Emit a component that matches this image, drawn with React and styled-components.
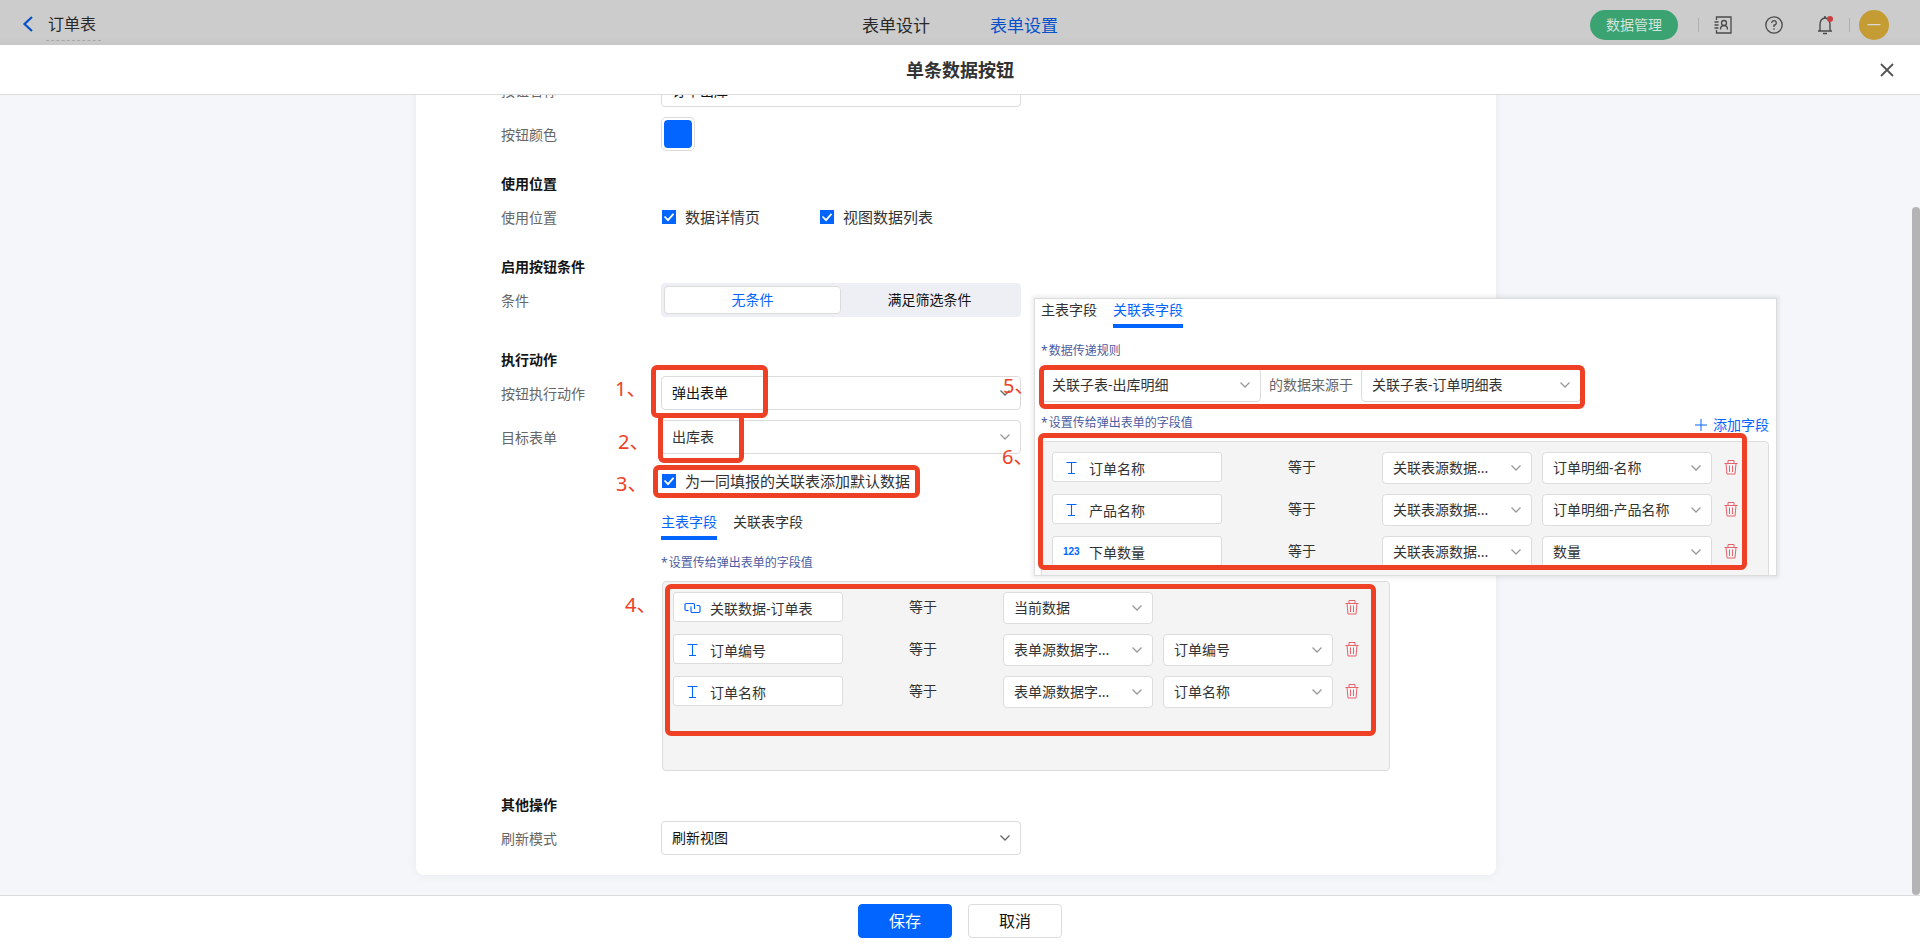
import React, { useLayoutEffect, useRef } from "react";
import styled, { createGlobalStyle } from "styled-components";

const GlobalStyle = createGlobalStyle`
  *, *::before, *::after {
    box-sizing: border-box;
  }
  html, body, #root {
    height: 100%;
  }
  body {
    margin: 0;
    overflow: hidden;
    font-family: "Noto Sans", "Noto Sans CJK SC", sans-serif;
    font-size: 14px;
    line-height: 20px;
    color: #141414;
  }
  button, input, select {
    font: inherit;
    color: inherit;
  }
`;

const Page = styled.div`
  display: flex;
  flex-direction: column;
  height: 100%;
  background: #fff;
`;

/* top bar, dimmed by the open dialog */
const TopBar = styled.header`
  display: grid;
  grid-template-columns: 1fr auto 1fr;
  align-items: center;
  flex: none;
  height: 45px;
  padding: 0 31px 0 22px;
  background: linear-gradient(#cccccc 36px, #c7c7c7);
  color: #292929;
`;

const BackLink = styled.a`
  display: flex;
  align-items: center;
  gap: 12px;
  padding-top: 3px;
  font-size: 16px;
  text-decoration: none;
  color: inherit;
`;

const FormName = styled.span`
  padding: 0 5px 0 2px;
  border-bottom: 1px dashed #a8a8a8;
  line-height: 32px;
`;

const TopTabs = styled.nav`
  display: flex;
  gap: 60px;
  padding-top: 6px;
  margin-left: 9px;
`;

const TopTab = styled.a`
  font-size: 17px;
  text-decoration: none;
  color: ${(props) => (props.$active ? "#0551cc" : "#292929")};
`;

const TopTools = styled.div`
  display: flex;
  align-items: center;
  justify-content: flex-end;
  padding-top: 5px;
`;

const DataButton = styled.button`
  width: 88px;
  height: 30px;
  margin-right: 20px;
  padding: 0;
  border: 0;
  border-radius: 15px;
  background: #3ba272;
  color: #d3e3db;
`;

const Divider = styled.span`
  width: 1px;
  height: 14px;
  background: #b0b0b0;
`;

const IconButton = styled.button`
  display: flex;
  padding: 0;
  border: 0;
  background: none;
  color: ${(props) => props.$color || "#4a4a4a"};
`;

const TopIcons = styled.div`
  display: flex;
  align-items: center;
  gap: 33px;
  margin: 0 15px;
`;

const Avatar = styled.button`
  width: 30px;
  height: 30px;
  margin-left: 9px;
  padding: 0;
  border: 0;
  border-radius: 50%;
  background: #c59c34;
  color: #d8d8d8;
`;

const DialogHeader = styled.div`
  display: grid;
  grid-template-columns: 1fr auto 1fr;
  align-items: center;
  flex: none;
  height: 50px;
  padding: 0 26px;
  border-bottom: 1px solid #dcdcdc;
`;

const DialogTitle = styled.h1`
  grid-column: 2;
  margin: 0;
  font-size: 18px;
  line-height: 26px;
  color: #333;
`;

const CloseButton = styled(IconButton)`
  justify-self: end;
`;

const Body = styled.main`
  position: relative;
  flex: 1;
  min-height: 0;
  background: #f4f6fa;
`;

const Scroller = styled.div`
  height: 100%;
  padding: 20px 8px 20px 0;
  overflow-x: hidden;
  overflow-y: auto;
  scrollbar-width: none;
`;

const ScrollThumb = styled.div`
  position: absolute;
  right: 0;
  bottom: 0;
  width: 8px;
  height: 86%;
  border-radius: 4px;
  background: #b4b4b4;
`;

const Card = styled.form`
  position: relative;
  max-width: 1080px;
  margin: 0 auto;
  padding: 91px 0 20px 85px;
  border-radius: 8px;
  background: #fff;
  box-shadow: 0 0 12px rgba(20, 30, 50, 0.05);
`;

const Section = styled.section`
  display: flex;
  flex-direction: column;
  gap: 10px;
  margin-bottom: ${(props) => props.$space || 0}px;
`;

const SectionTitle = styled.h2`
  margin: 0 0 -10px;
  font-size: 14px;
  line-height: 32px;
  color: #141414;
`;

const Row = styled.div`
  display: flex;
  align-items: flex-start;
`;

const RowLabel = styled.label`
  flex: none;
  width: 160px;
  height: 34px;
  line-height: 36px;
  color: #666;
`;

const Stack = styled.div`
  display: flex;
  flex-direction: column;
`;

const TextInput = styled.input`
  width: 360px;
  height: 34px;
  padding: 0 10px;
  border: 1px solid #dcdcdc;
  border-radius: 4px;
  background: #fff;
`;

const Swatch = styled.button`
  width: 34px;
  height: 34px;
  padding: 2px;
  border: 1px solid #dcdcdc;
  border-radius: 5px;
  background: #fff;

  &::before {
    content: "";
    display: block;
    height: 100%;
    border-radius: 4px;
    background: #0265ff;
  }
`;

const CheckLabel = styled.label`
  display: flex;
  align-items: center;
  gap: 9px;
  height: 34px;
  min-width: ${(props) => props.$width || 0}px;
  padding-left: 1px;
  font-size: 15px;
  color: #333;
`;

const CheckWrap = styled.span`
  display: grid;
  width: 14px;
  height: 14px;

  > * {
    grid-area: 1 / 1;
  }
`;

const CheckInput = styled.input`
  appearance: none;
  width: 14px;
  height: 14px;
  margin: 0;
  border: 1px solid #c0c0c0;

  &:checked {
    border-color: #0265ff;
    background: #0265ff;
  }
`;

const CheckMark = styled.svg`
  width: 14px;
  height: 14px;
  pointer-events: none;
`;

const Segments = styled.div`
  display: flex;
  width: 360px;
  height: 34px;
  padding: 3px;
  border-radius: 4px;
  background: #eeeff5;
`;

const Segment = styled.button`
  flex: 1;
  padding: 0;
  border: 1px solid ${(props) => (props.$active ? "#dcdcdc" : "transparent")};
  border-radius: 4px;
  background: ${(props) => (props.$active ? "#fff" : "transparent")};
  color: ${(props) => (props.$active ? "#0265ff" : "#141414")};
`;

const SelectWrap = styled.span`
  display: inline-grid;
  flex: none;
  align-items: center;
  width: ${(props) => props.$width}px;

  > * {
    grid-area: 1 / 1;
  }
`;

const SelectBox = styled.select`
  appearance: none;
  width: 100%;
  height: ${(props) => props.$height}px;
  padding: 0 28px 0 10px;
  border: 1px solid #dcdcdc;
  border-radius: 4px;
  background: #fff;
  color: ${(props) => (props.$strong ? "#141414" : "#333")};
  text-overflow: ellipsis;
`;

const Chevron = styled.svg`
  justify-self: end;
  width: 10px;
  height: 6px;
  margin-right: 11px;
  pointer-events: none;
  color: ${(props) => (props.$strong ? "#666" : "#999")};
`;

const Tabs = styled.div`
  display: flex;
  gap: 16px;
`;

const Tab = styled.button`
  height: 29px;
  padding: 0 0 4px;
  border: 0;
  border-bottom: 4px solid ${(props) => (props.$active ? "#0265ff" : "transparent")};
  background: none;
  color: ${(props) => (props.$active ? "#0265ff" : "#333")};
`;

const Hint = styled.p`
  display: flex;
  gap: 1px;
  margin: 0;
  font-size: 12px;
  line-height: 20px;
  color: #4b5c9f;
`;

const SubForm = styled.div`
  padding-top: 10px;
`;

const MainTabs = styled(Tabs)`
  margin: 13px 0;
`;

const MainFields = styled.div`
  padding: 8px 0 0 1px;
`;

const FieldTable = styled.div`
  display: flex;
  flex: none;
  flex-direction: column;
  gap: 10px;
  width: 728px;
  height: 190px;
  padding: 10px;
  border: 1px solid #dcdcdc;
  border-radius: 4px;
  background: #f4f4f4;
`;

const FieldRow = styled.div`
  display: flex;
  align-items: flex-start;
  gap: 10px;
  height: 32px;
`;

const FieldName = styled.div`
  display: flex;
  align-items: center;
  gap: 9px;
  width: 170px;
  height: 30px;
  padding: 3px 10px 0;
  border: 1px solid #dcdcdc;
  border-radius: 3px;
  background: #fff;
  color: #333;
`;

const FieldIcon = styled.svg`
  width: 17px;
  height: 14px;
  margin-bottom: 2px;
  color: #0265ff;
`;

const NumberIcon = styled.span`
  width: 17px;
  margin-bottom: 2px;
  font-family: "Liberation Sans", sans-serif;
  font-size: 10px;
  font-weight: bold;
  color: #0265ff;
`;

const Operator = styled.span`
  width: 140px;
  line-height: 30px;
  text-align: center;
  color: #333;
`;

const DeleteButton = styled(IconButton)`
  margin: 8px 0 0 auto;
  padding-right: 20px;
`;

/* panel for the linked sub-form, lies over the card */
const FloatPanel = styled.aside`
  position: absolute;
  top: 316px;
  left: 618px;
  width: 743px;
  height: 278px;
  padding: 0 6px;
  overflow: hidden;
  border: 1px solid #dcdcdc;
  background: #fff;
  box-shadow: 0 0 4px 2px rgba(0, 0, 0, 0.08);
`;

const RuleHint = styled(Hint)`
  margin-top: 13px;
`;

const RuleRow = styled.div`
  display: flex;
  align-items: center;
  gap: 8px;
  margin: 7px 0 11px;
  color: #666;
`;

const HintBar = styled.div`
  display: flex;
  align-items: flex-start;
  justify-content: space-between;
  height: 28px;
  padding-right: 1px;
`;

const AddButton = styled.button`
  display: flex;
  align-items: center;
  gap: 6px;
  padding: 2px 0 0;
  border: 0;
  background: none;
  color: #0265ff;
`;

const Mark = styled.div`
  position: absolute;
  top: ${(props) => props.$top}px;
  left: ${(props) => props.$left}px;
  width: ${(props) => props.$width}px;
  height: ${(props) => props.$height}px;
  border: 5px solid #ee4025;
  border-radius: 6px;
  pointer-events: none;
`;

const MarkNumber = styled.span`
  position: absolute;
  top: ${(props) => props.$top}px;
  left: ${(props) => props.$left}px;
  font-size: 20px;
  line-height: 30px;
  white-space: nowrap;
  color: #ee4025;
  pointer-events: none;
`;

const Footer = styled.footer`
  display: flex;
  align-items: center;
  justify-content: center;
  gap: 16px;
  flex: none;
  height: 50px;
  border-top: 1px solid #dcdcdc;
  background: #fff;
`;

const FooterButton = styled.button`
  width: 94px;
  height: 34px;
  padding: 0;
  border: 1px solid ${(props) => (props.$primary ? "#0265ff" : "#dcdcdc")};
  border-radius: 4px;
  background: ${(props) => (props.$primary ? "#0265ff" : "#fff")};
  color: ${(props) => (props.$primary ? "#fff" : "#141414")};
  font-size: 16px;
`;

const Select = ({ id, label, value, width, height = 34, strong }) => (
  <SelectWrap $width={width}>
    <SelectBox id={id} aria-label={label} $height={height} $strong={strong} defaultValue={value}>
      <option>{value}</option>
    </SelectBox>
    <Chevron $strong={strong} viewBox="0 0 10 6" fill="none" stroke="currentColor" strokeWidth="1.3">
      <path d="M.5.5 5 5 9.5.5" />
    </Chevron>
  </SelectWrap>
);

const Check = ({ label, width }) => (
  <CheckLabel $width={width}>
    <CheckWrap>
      <CheckInput type="checkbox" defaultChecked />
      <CheckMark viewBox="0 0 14 14" fill="none" stroke="#fff" strokeWidth="1.8">
        <path d="M2.5 6.5 6 10.2 11.5 3.8" />
      </CheckMark>
    </CheckWrap>
    {label}
  </CheckLabel>
);

const TypeIcon = ({ type }) => {
  if (type === "number") return <NumberIcon>123</NumberIcon>;
  if (type === "link") {
    return (
      <FieldIcon viewBox="0 0 17 14" fill="none" stroke="currentColor" strokeWidth="1.2">
        <path d="M4.5 9.5H2.2A1.2 1.2 0 0 1 1 8.3V3.7A1.2 1.2 0 0 1 2.2 2.5H9.3A1.2 1.2 0 0 1 10.500 3.7V8" />
        <path d="M12.5 4.5H14.8A1.2 1.2 0 0 1 16 5.7V10.3A1.2 1.2 0 0 1 14.8 11.5H8.2A1.2 1.2 0 0 1 7 10.3V5.500" />
      </FieldIcon>
    );
  }
  return (
    <FieldIcon viewBox="0 0 17 14" fill="none" stroke="currentColor" strokeWidth="1.1">
      <path d="M3.5 1.5H13.5M8.5 1.5V12.5M5 12.5H12" />
    </FieldIcon>
  );
};

const TrashIcon = () => (
  <svg width="14" height="15" viewBox="0 0 14 15" fill="none" stroke="currentColor">
    <path d="M.5 3.5H13.5M4 3.5V.5H10V3.5M2 3.5 3 14H11L12 3.5M5.5 5.5V12M8.5 5.5V12" />
  </svg>
);

const Fields = ({ rows }) => (
  <FieldTable>
    {rows.map((row) => (
      <FieldRow key={row.name}>
        <FieldName>
          <TypeIcon type={row.type} />
          {row.name}
        </FieldName>
        <Operator>等于</Operator>
        <Select label={`${row.name}来源`} value={row.source} width={150} height={32} />
        {row.field && <Select label={`${row.name}字段`} value={row.field} width={170} height={32} />}
        <DeleteButton type="button" aria-label="删除" $color="#e8616b">
          <TrashIcon />
        </DeleteButton>
      </FieldRow>
    ))}
  </FieldTable>
);

const mainRows = [
  { type: "link", name: "关联数据-订单表", source: "当前数据" },
  { type: "text", name: "订单编号", source: "表单源数据字...", field: "订单编号" },
  { type: "text", name: "订单名称", source: "表单源数据字...", field: "订单名称" },
];

const linkedRows = [
  { type: "text", name: "订单名称", source: "关联表源数据...", field: "订单明细-名称" },
  { type: "text", name: "产品名称", source: "关联表源数据...", field: "订单明细-产品名称" },
  { type: "number", name: "下单数量", source: "关联表源数据...", field: "数量" },
];

// box: top, left, width, height; number: top, left
const marks = [
  { box: [383, 235, 117, 53], number: [392, 199] },
  { box: [431, 242, 86, 50], number: [445, 202] },
  { box: [483, 237, 267, 33], number: [487, 200] },
  { box: [602, 249, 711, 152], number: [608, 209] },
  { box: [383, 623, 546, 44], number: [389, 587] },
  { box: [451, 622, 709, 137], number: [460, 586] },
];

const LinkedPanel = () => (
  <FloatPanel>
    <Tabs>
      <Tab type="button">主表字段</Tab>
      <Tab type="button" $active>关联表字段</Tab>
    </Tabs>
    <RuleHint>
      <span>*</span>数据传递规则
    </RuleHint>
    <RuleRow>
      <Select label="目标子表" value="关联子表-出库明细" width={220} />
      的数据来源于
      <Select label="来源子表" value="关联子表-订单明细表" width={220} />
    </RuleRow>
    <HintBar>
      <Hint>
        <span>*</span>设置传给弹出表单的字段值
      </Hint>
      <AddButton type="button">
        <svg width="12" height="12" viewBox="0 0 12 12" stroke="currentColor">
          <path d="M6 0V12M0 6H12" />
        </svg>
        添加字段
      </AddButton>
    </HintBar>
    <Fields rows={linkedRows} />
  </FloatPanel>
);

const App = () => {
  const scroller = useRef(null);

  useLayoutEffect(() => {
    scroller.current.scrollTop = scroller.current.scrollHeight;
  }, []);

  return (
    <Page>
      <GlobalStyle />
      <TopBar>
        <BackLink href="#">
          <svg width="12" height="16" viewBox="0 0 12 16" fill="none" stroke="#0551cc" strokeWidth="2.2">
            <path d="M10 1 2.5 8 10 15" />
          </svg>
          <FormName>订单表</FormName>
        </BackLink>
        <TopTabs>
          <TopTab href="#">表单设计</TopTab>
          <TopTab href="#" $active>表单设置</TopTab>
        </TopTabs>
        <TopTools>
          <DataButton type="button">数据管理</DataButton>
          <Divider />
          <TopIcons>
            <IconButton type="button" aria-label="通讯录">
              <svg width="18" height="18" viewBox="0 0 18 18" fill="none" stroke="currentColor" strokeWidth="1.3">
                <path d="M2.5 4V1H17V17H2.5V14M.5 6H4.500M.5 9H4.500M.5 12H4.500" />
                <circle cx="10" cy="7" r="2.5" />
                <path d="M6.500 13.5C6.500 10.5 8 9.5 10 9.5S13.500 10.5 13.500 13.5" />
              </svg>
            </IconButton>
            <IconButton type="button" aria-label="帮助">
              <svg width="18" height="18" viewBox="0 0 18 18" fill="none" stroke="currentColor" strokeWidth="1.3">
                <circle cx="9" cy="9" r="8.2" />
                <path d="M6.700 7A2.3 2.3 0 1 1 9 9.2V11M9 12.2V13.7" />
              </svg>
            </IconButton>
            <IconButton type="button" aria-label="消息">
              <svg width="18" height="20" viewBox="0 0 18 20" fill="none" stroke="currentColor" strokeWidth="1.4">
                <path d="M4 16V9A5 6 0 0 1 14 9V16M2 16H16M7 18.5H11M8 2H10" />
                <circle cx="14" cy="4" r="3" fill="#cc3f3f" stroke="none" />
              </svg>
            </IconButton>
          </TopIcons>
          <Divider />
          <Avatar type="button">一</Avatar>
        </TopTools>
      </TopBar>

      <DialogHeader>
        <DialogTitle>单条数据按钮</DialogTitle>
        <CloseButton type="button" aria-label="关闭" $color="#555">
          <svg width="14" height="14" viewBox="0 0 14 14" stroke="currentColor" strokeWidth="1.8">
            <path d="M1 1 13 13M13 1 1 13" />
          </svg>
        </CloseButton>
      </DialogHeader>

      <Body>
        <Scroller ref={scroller}>
          <Card>
            <Section $space={17}>
              <Row>
                <RowLabel htmlFor="name">按钮名称</RowLabel>
                <TextInput id="name" defaultValue="订单出库" />
              </Row>
              <Row>
                <RowLabel htmlFor="color">按钮颜色</RowLabel>
                <Swatch id="color" type="button" />
              </Row>
            </Section>

            <Section $space={17}>
              <SectionTitle>使用位置</SectionTitle>
              <Row>
                <RowLabel as="span">使用位置</RowLabel>
                <Check label="数据详情页" width={158} />
                <Check label="视图数据列表" />
              </Row>
            </Section>

            <Section $space={27}>
              <SectionTitle>启用按钮条件</SectionTitle>
              <Row>
                <RowLabel as="span">条件</RowLabel>
                <Segments>
                  <Segment type="button" $active>无条件</Segment>
                  <Segment type="button">满足筛选条件</Segment>
                </Segments>
              </Row>
            </Section>

            <Section $space={18}>
              <SectionTitle>执行动作</SectionTitle>
              <Row>
                <RowLabel htmlFor="action">按钮执行动作</RowLabel>
                <Select id="action" value="弹出表单" width={360} strong />
              </Row>
              <Row>
                <RowLabel htmlFor="target">目标表单</RowLabel>
                <Stack>
                  <Select id="target" value="出库表" width={360} />
                  <SubForm>
                    <Check label="为一同填报的关联表添加默认数据" />
                    <MainTabs>
                      <Tab type="button" $active>主表字段</Tab>
                      <Tab type="button">关联表字段</Tab>
                    </MainTabs>
                    <Hint>
                      <span>*</span>设置传给弹出表单的字段值
                    </Hint>
                    <MainFields>
                      <Fields rows={mainRows} />
                    </MainFields>
                  </SubForm>
                </Stack>
              </Row>
            </Section>

            <Section>
              <SectionTitle>其他操作</SectionTitle>
              <Row>
                <RowLabel htmlFor="refresh">刷新模式</RowLabel>
                <Select id="refresh" value="刷新视图" width={360} strong />
              </Row>
            </Section>

            <LinkedPanel />
            {marks.map(({ box, number }, index) => (
              <React.Fragment key={index}>
                <Mark $top={box[0]} $left={box[1]} $width={box[2]} $height={box[3]} />
                <MarkNumber $top={number[0]} $left={number[1]}>{index + 1}、</MarkNumber>
              </React.Fragment>
            ))}
          </Card>
        </Scroller>
        <ScrollThumb />
      </Body>

      <Footer>
        <FooterButton type="button" $primary>保存</FooterButton>
        <FooterButton type="button">取消</FooterButton>
      </Footer>
    </Page>
  );
};

export default App;
